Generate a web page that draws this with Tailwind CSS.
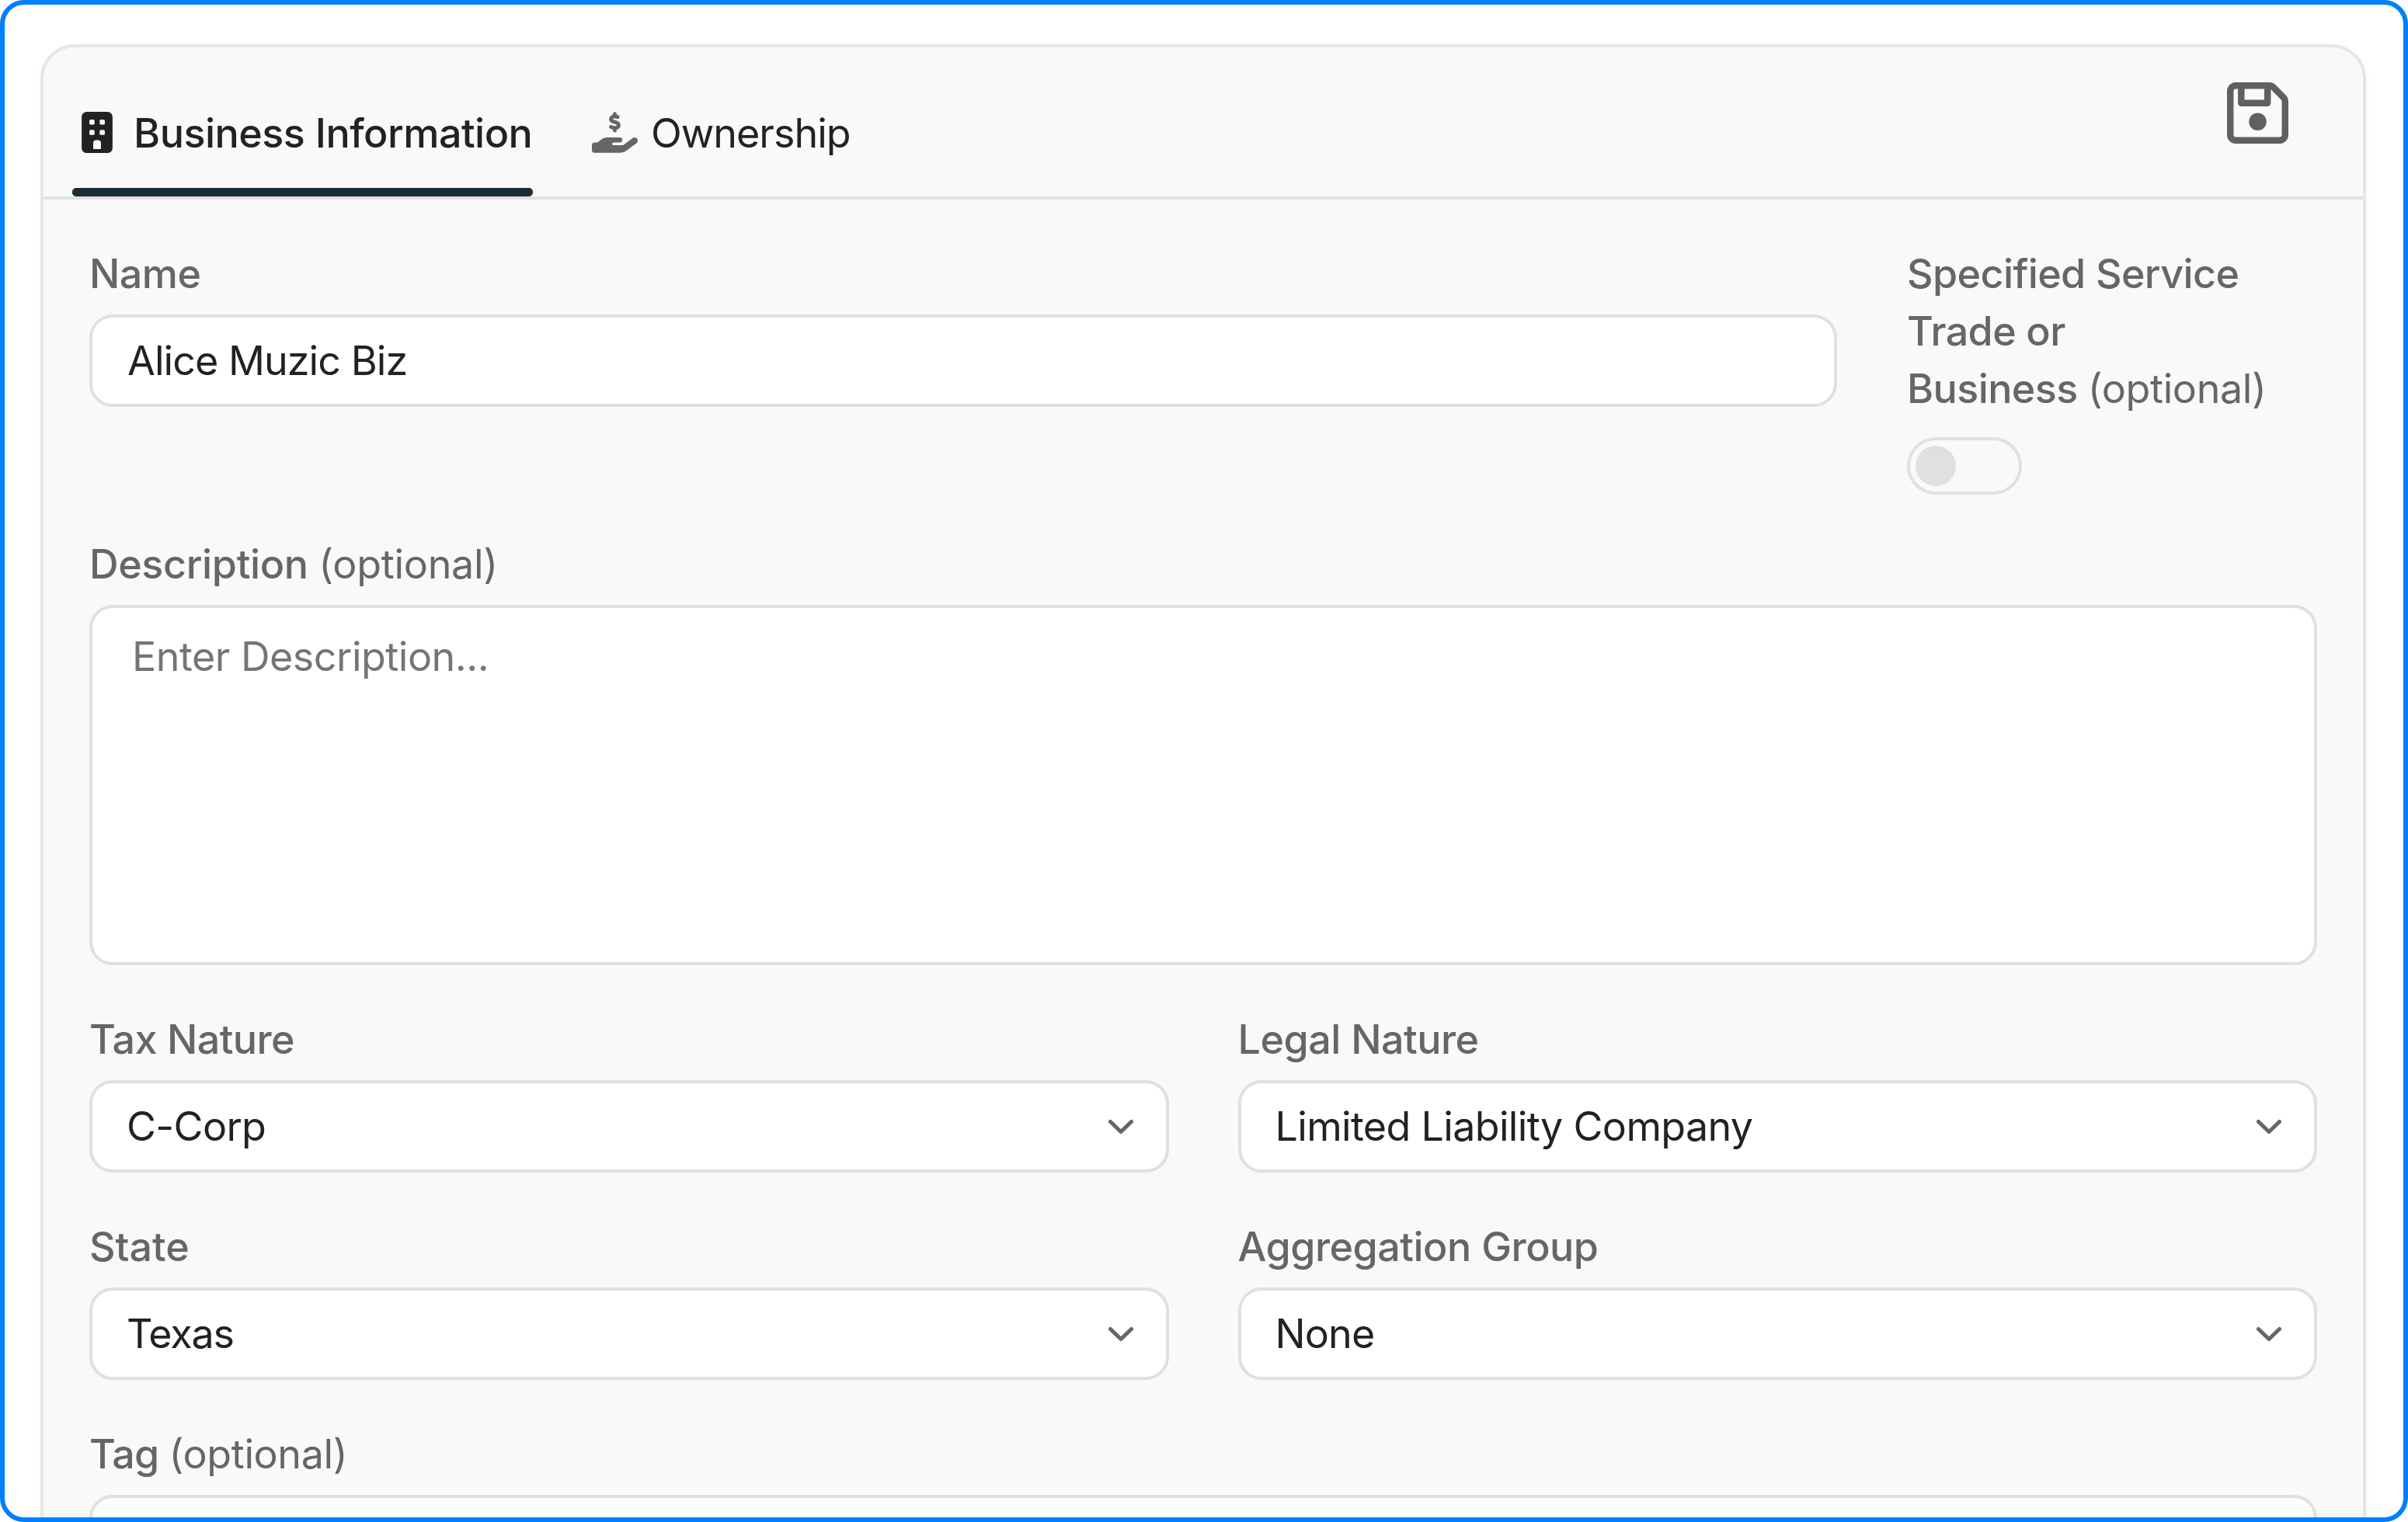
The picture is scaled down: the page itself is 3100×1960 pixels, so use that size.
<!DOCTYPE html>
<html lang="en">
<head>
  <meta charset="UTF-8">
  <title>Business Information</title>
  <script src="https://cdn.jsdelivr.net/npm/@tailwindcss/browser@4"></script>
</head>
<body class="bg-white">
  <div class="h-[1960px] w-[3100px] overflow-hidden rounded-[31px] border-[6px] border-[#007fff] bg-white pt-[51px] pr-12 pl-[46px] font-['Inter',sans-serif] text-[52px] leading-[74px] text-[#222]">
    <div class="h-[2000px] rounded-[44px] border-4 border-[#e6e6e6] bg-[#f9f9f9] shadow-[0_4px_14px_rgba(0,0,0,0.03)]">

      <!-- Tabs -->
      <div class="flex h-[196px] items-end justify-between border-b-4 border-[#e0e0e0] pr-24 pl-[37px]">
        <div class="flex gap-[76px]">
          <button class="flex w-[593px] flex-col">
            <span class="flex h-[100px] w-full items-start gap-[27px] pl-3 font-medium tracking-[-0.5px] whitespace-nowrap">
              <svg class="mt-[2px] h-[53px] w-[40px] shrink-0" viewBox="0 0 384 512" fill="currentColor"><path fill-rule="evenodd" d="M64 0C28.700 0 0 28.700 0 64V448c0 35.300 28.700 64 64 64H320c35.300 0 64-28.700 64-64V64c0-35.300-28.700-64-64-64H64zM112 96h32c8.800 0 16 7.200 16 16v32c0 8.800-7.200 16-16 16H112c-8.800 0-16-7.200-16-16V112c0-8.800 7.200-16 16-16zM240 96h32c8.800 0 16 7.200 16 16v32c0 8.800-7.200 16-16 16H240c-8.800 0-16-7.200-16-16V112c0-8.800 7.200-16 16-16zM112 224h32c8.800 0 16 7.200 16 16v32c0 8.800-7.200 16-16 16H112c-8.800 0-16-7.200-16-16V240c0-8.800 7.200-16 16-16zM240 224h32c8.800 0 16 7.200 16 16v32c0 8.800-7.200 16-16 16H240c-8.800 0-16-7.200-16-16V240c0-8.800 7.200-16 16-16zM176 352h32c17.700 0 32 14.300 32 32v80H144V384c0-17.700 14.300-32 32-32z"/></svg>
              <span class="-mt-[7px]">Business Information</span>
            </span>
            <span class="h-[11px] w-full rounded-[5px] bg-[#1b2e38]"></span>
          </button>
          <button class="flex h-[111px] items-start gap-[17px]">
            <svg class="mt-[2px] h-[53px] w-[59px] text-[#666]" viewBox="0 0 576 512" fill="currentColor"><path d="M312 24V34.500c6.400 1.200 12.600 2.700 18.200 4.200c12.800 3.400 20.400 16.600 17 29.400s-16.600 20.400-29.400 17c-10.900-2.900-21.100-4.900-30.200-5c-7.300-.1-14.700 1.700-19.400 4.400c-2.100 1.300-3.100 2.400-3.500 3c-.3 .5-.7 1.200-.7 2.800c0 .3 0 .5 0 .6c.2 .2 .9 1.200 3.300 2.600c5.800 3.500 14.400 6.200 27.400 10.100l.9 .3c11.100 3.300 25.900 7.800 37.900 15.300c13.700 8.600 26.100 22.900 26.400 44.900c.3 22.500-11.400 38.900-26.700 48.500c-6.700 4.100-13.900 7-21.300 8.800V232c0 13.300-10.700 24-24 24s-24-10.700-24-24V220.600c-9.500-2.300-18.200-5.300-25.600-7.800c-2.100-.7-4.100-1.400-6-2c-12.600-4.200-19.400-17.800-15.200-30.400s17.800-19.400 30.400-15.200c2.600 .9 5 1.700 7.300 2.500c13.600 4.600 23.400 7.900 33.900 8.300c8 .3 15.100-1.600 19.200-4.100c1.900-1.200 2.800-2.200 3.200-2.900c.4-.6 .9-1.800 .8-4.100l0-.2c0-1 0-2.100-4-4.600c-5.700-3.600-14.300-6.400-27.100-10.300l-1.900-.6c-10.800-3.200-25-7.500-36.400-14.400c-13.500-8.100-26.500-22-26.600-44.100c-.1-22.900 12.900-38.600 27.700-47.400c6.400-3.800 13.300-6.400 20.200-8.200V24c0-13.300 10.700-24 24-24s24 10.700 24 24zM568.200 336.300c13.100 17.800 9.300 42.800-8.500 55.900L433.100 485.500c-23.400 17.200-51.600 26.500-80.700 26.500H192 32c-17.700 0-32-14.300-32-32V416c0-17.700 14.300-32 32-32H68.800l44.900-36c22.700-18.200 50.900-28 80-28H272h16 64c17.700 0 32 14.300 32 32s-14.300 32-32 32H288 272c-8.800 0-16 7.200-16 16s7.200 16 16 16H392.600l119.700-88.200c17.800-13.100 42.800-9.300 55.900 8.500z"/></svg>
            <span class="-mt-[7px] tracking-[-1px]">Ownership</span>
          </button>
        </div>
        <button class="mb-[68px] text-[#606060]">
          <svg class="size-[79px]" viewBox="0 32 448 448" fill="currentColor"><path d="M48 96V416c0 8.800 7.200 16 16 16H384c8.800 0 16-7.200 16-16V170.500c0-4.200-1.700-8.300-4.700-11.300l33.900-33.900c12 12 18.700 28.300 18.700 45.300V416c0 35.300-28.700 64-64 64H64c-35.300 0-64-28.700-64-64V96C0 60.700 28.700 32 64 32H309.500c17 0 33.300 6.700 45.300 18.700l74.500 74.500-33.900 33.900L320.800 84.700c-.3-.3-.5-.5-.8-.8V184c0 13.300-10.700 24-24 24H104c-13.300 0-24-10.700-24-24V80H64c-8.800 0-16 7.200-16 16zm80-16v80H272V80H128zm32 240a64 64 0 1 1 128 0 64 64 0 1 1 -128 0z"/></svg>
        </button>
      </div>

      <!-- Form -->
      <form class="px-[59px] pt-[59px]">
        <div class="flex gap-[90px]">
          <div class="w-[2250px]">
            <label class="block font-medium tracking-[-0.5px] text-[#666]">Name</label>
            <div class="mt-[15px] flex h-[119px] items-center rounded-[30px] border-4 border-[#e0e0e0] bg-white px-[45px] tracking-[-0.95px]">Alice Muzic Biz</div>
          </div>
          <div class="flex-1">
            <label class="block font-medium tracking-[-0.6px] whitespace-nowrap text-[#666]">Specified Service<br>Trade or<br>Business <span class="font-normal tracking-[-0.4px]">(optional)</span></label>
            <div class="mt-[25px] flex h-[74px] w-[148px] items-center rounded-full border-4 border-[#e0e0e0] px-[7px]">
              <span class="size-[52px] rounded-full bg-[#e0e0e0]"></span>
            </div>
          </div>
        </div>

        <div class="mt-[53px]">
          <label class="block font-medium tracking-[-0.35px] text-[#666]">Description <span class="font-normal tracking-[-0.3px]">(optional)</span></label>
          <textarea class="mt-[15px] block h-[464px] w-full resize-none rounded-[30px] border-4 border-[#e0e0e0] bg-white px-[51px] py-[26px] tracking-[-0.5px] placeholder:text-[#757575]" placeholder="Enter Description..."></textarea>
        </div>

        <div class="mt-[59px] grid grid-cols-2 gap-x-[89px] gap-y-[59px]">
          <div>
            <label class="block font-medium tracking-[-0.6px] text-[#666]">Tax Nature</label>
            <div class="mt-[15px] flex h-[119px] items-center justify-between rounded-[30px] border-4 border-[#e0e0e0] bg-white pr-[41px] pl-11 tracking-[-0.67px]">
              C-Corp
              <svg class="h-5 w-[34px] text-[#666]" viewBox="0 0 34 20" fill="none" stroke="currentColor" stroke-width="5" stroke-linecap="round" stroke-linejoin="round"><path d="M3.500 3.500L17 16.500L30.500 3.500"/></svg>
            </div>
          </div>
          <div>
            <label class="block font-medium tracking-[-0.5px] text-[#666]">Legal Nature</label>
            <div class="mt-[15px] flex h-[119px] items-center justify-between rounded-[30px] border-4 border-[#e0e0e0] bg-white pr-[41px] pl-11 tracking-[-0.67px]">
              Limited Liability Company
              <svg class="h-5 w-[34px] text-[#666]" viewBox="0 0 34 20" fill="none" stroke="currentColor" stroke-width="5" stroke-linecap="round" stroke-linejoin="round"><path d="M3.500 3.500L17 16.500L30.500 3.500"/></svg>
            </div>
          </div>
          <div>
            <label class="block font-medium text-[#666]">State</label>
            <div class="mt-[15px] flex h-[119px] items-center justify-between rounded-[30px] border-4 border-[#e0e0e0] bg-white pr-[41px] pl-11 tracking-[-1.2px]">
              Texas
              <svg class="h-5 w-[34px] text-[#666]" viewBox="0 0 34 20" fill="none" stroke="currentColor" stroke-width="5" stroke-linecap="round" stroke-linejoin="round"><path d="M3.500 3.500L17 16.500L30.500 3.500"/></svg>
            </div>
          </div>
          <div>
            <label class="block font-medium tracking-[-0.5px] text-[#666]">Aggregation Group</label>
            <div class="mt-[15px] flex h-[119px] items-center justify-between rounded-[30px] border-4 border-[#e0e0e0] bg-white pr-[41px] pl-11 tracking-[-0.9px]">
              None
              <svg class="h-5 w-[34px] text-[#666]" viewBox="0 0 34 20" fill="none" stroke="currentColor" stroke-width="5" stroke-linecap="round" stroke-linejoin="round"><path d="M3.500 3.500L17 16.500L30.500 3.500"/></svg>
            </div>
          </div>
        </div>

        <div class="mt-[59px]">
          <label class="block font-medium tracking-[-0.8px] text-[#666]">Tag <span class="font-normal tracking-[-0.4px]">(optional)</span></label>
          <div class="mt-[15px] h-[119px] rounded-[30px] border-4 border-[#e0e0e0] bg-white"></div>
        </div>
      </form>
    </div>
  </div>
</body>
</html>
